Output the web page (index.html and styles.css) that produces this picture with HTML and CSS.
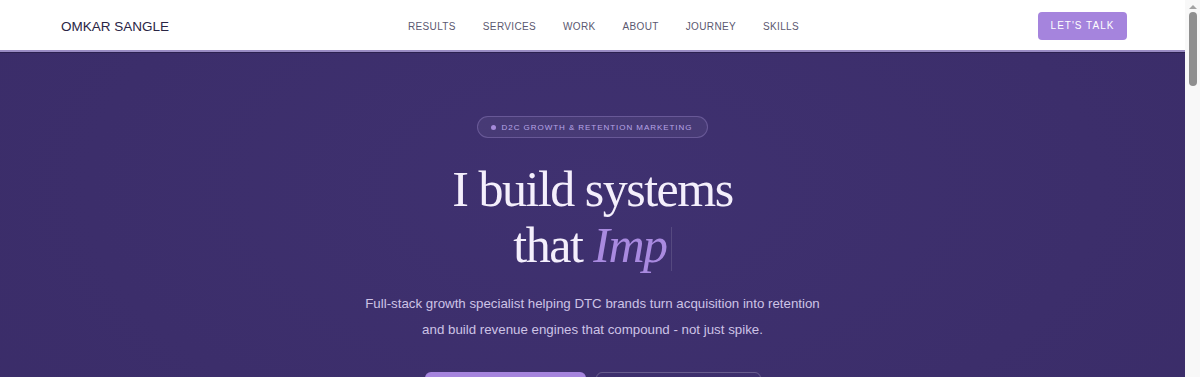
FILE: index.html
```html
<!DOCTYPE html>
<html lang="en">
<head>
    <meta charset="UTF-8">
    <meta name="viewport" content="width=device-width, initial-scale=1.0">
    <title>Omkar Sangle - D2C Growth</title>
    <link rel="stylesheet" href="styles.css">
</head>
<body>
    <header id="nav">
        <a class="logo" href="#">OMKAR SANGLE</a>
        <nav class="links">
            <a href="#results">Results</a>
            <a href="#services">Services</a>
            <a href="#work">Work</a>
            <a href="#about">About</a>
            <a href="#journey">Journey</a>
            <a href="#skills">Skills</a>
        </nav>
        <a class="talk" href="#contact">Let's Talk</a>
    </header>

    <section id="hero">
        <div class="badge"><span class="dot"></span>D2C Growth &amp; Retention Marketing</div>
        <h1>I build systems<br>that <em>Imp</em><span class="caret"></span></h1>
        <p class="lead">Full-stack growth specialist helping DTC brands turn acquisition into retention<br>and build revenue engines that compound - not just spike.</p>
        <div class="actions">
            <a class="btn primary" href="#work">See My Work</a>
            <a class="btn ghost" href="#contact">Book a Call</a>
        </div>
    </section>

    <section id="results">
        <h2>Results</h2>
    </section>

    <!-- page scrollbar -->
    <div class="scrollbar">
        <span class="arrow"></span>
        <span class="thumb"></span>
    </div>
</body>
</html>
```
FILE: styles.css
```css
* {
    margin: 0;
    padding: 0;
    box-sizing: border-box;
}
html, body {
    font-family: "Liberation Sans", Arial, sans-serif;
    background: #3d2f6d;
}
body {
    margin-right: 15px;
}
a {
    text-decoration: none;
}

.scrollbar {
    position: fixed;
    top: 0;
    right: 0;
    width: 15px;
    height: 100vh;
    background: #f8f8f8;
    display: flex;
    flex-direction: column;
    align-items: center;
}
.arrow {
    margin-top: 5px;
    width: 0;
    height: 0;
    border-left: 4px solid transparent;
    border-right: 4px solid transparent;
    border-bottom: 4px solid #a3a3a3;
}
.thumb {
    margin-top: 3px;
    width: 8px;
    height: 74px;
    border-radius: 4px;
    background: #8f8f8f;
}

#nav {
    height: 53px;
    background: #fff;
    border-bottom: 1px solid #2c2150;
    box-shadow: inset 0 -2px 0 #9a8cc4;
    display: flex;
    align-items: center;
    justify-content: space-between;
    padding: 0 58px 0 61px;
}
.logo {
    font-size: 13.5px;
    color: #2a2545;
}
.links {
    display: flex;
    gap: 27px;
}
.links a {
    font-size: 10px;
    text-transform: uppercase;
    letter-spacing: 0.35px;
    color: #5b5870;
}
.talk {
    width: 89px;
    height: 28px;
    border-radius: 4px;
    background: #a584dd;
    color: #fff;
    font-size: 10px;
    letter-spacing: 1px;
    text-transform: uppercase;
    display: flex;
    align-items: center;
    justify-content: center;
    margin-top: -1px;
}

#hero {
    background: radial-gradient(ellipse at 50% 30%, #3f3170 0%, #3c2e6b 60%, #3a2c68 100%);
    display: flex;
    flex-direction: column;
    align-items: center;
    padding-top: 63px;
    padding-bottom: 80px;
    text-align: center;
}
.badge {
    height: 22px;
    padding: 0 15px 0 13px;
    border-radius: 11px;
    border: 1px solid rgba(180, 160, 230, 0.3);
    background: rgba(255, 255, 255, 0.05);
    display: flex;
    align-items: center;
    gap: 6px;
    font-size: 8px;
    letter-spacing: 0.95px;
    text-transform: uppercase;
    color: #b7a5e6;
}
.dot {
    width: 5px;
    height: 5px;
    border-radius: 50%;
    background: #a58ad9;
}
#hero h1 {
    margin-top: 23px;
    font-family: "Liberation Serif", "Times New Roman", serif;
    font-weight: 400;
    font-size: 50px;
    line-height: 56px;
    letter-spacing: -1.5px;
    color: #f4effc;
}
#hero h1 em {
    color: #a98ae0;
}
.caret {
    display: inline-block;
    width: 1px;
    height: 44px;
    margin-left: 4px;
    vertical-align: -9px;
    background: rgba(255, 255, 255, 0.12);
}
.lead {
    margin-top: 18px;
    font-size: 13.3px;
    line-height: 26px;
    color: #cdc3e6;
}
.actions {
    margin-top: 29px;
    display: flex;
    gap: 10px;
}
.btn {
    height: 52px;
    border-radius: 6px;
    display: flex;
    align-items: center;
    justify-content: center;
    font-size: 12px;
    letter-spacing: 1px;
    text-transform: uppercase;
    color: #fff;
}
.primary {
    width: 161px;
    background: #a584dd;
}
.ghost {
    width: 165px;
    border: 1px solid rgba(255, 255, 255, 0.22);
}

#results {
    background: #fff;
    padding: 80px 0;
    text-align: center;
}
```
